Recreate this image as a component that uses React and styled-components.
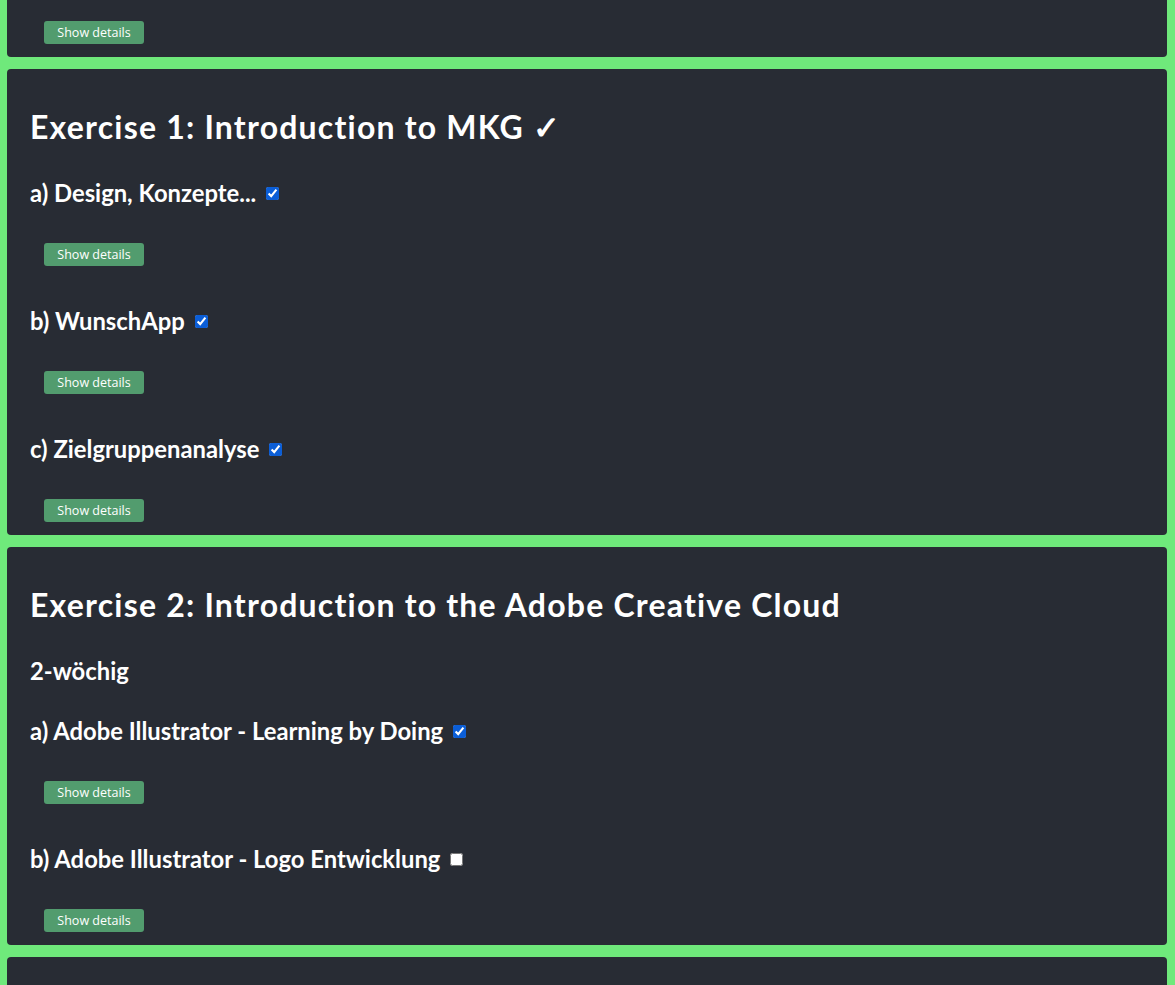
import React from "react";
import styled, { createGlobalStyle } from "styled-components";

const Global = createGlobalStyle`
  html, body { margin: 0; padding: 0; background: #6fe97b; }
  body { font-family: Lato, "Noto Sans", sans-serif; }
`;

const Page = styled.div`
  display: flex;
  flex-direction: column;
  gap: 12px;
  padding: 0 8px 0 7px;
  margin-top: -13px;
`;

const Card = styled.section`
  background: #282c34;
  border-radius: 4px;
  padding: 0 23px 13.5px;
  display: flex;
  flex-direction: column;
  color: #fff;
`;

const Title = styled.h1`
  margin: 39px 0 33.5px;
  font-size: 32px;
  line-height: 38px;
  font-weight: 700;
  letter-spacing: 1.2px;
  white-space: nowrap;
`;

const Sub = styled.h3`
  margin: 0;
  font-size: 23.8px;
  line-height: 26px;
  font-weight: 700;
  display: flex;
  align-items: center;
  white-space: nowrap;
`;

const Item = styled.div`
  display: flex;
  flex-direction: column;
  align-items: flex-start;
  gap: 37px;
  & + & { margin-top: 42px; }
`;

const Note = styled(Sub)`
  margin-bottom: 34px;
`;

const Check = styled.input`
  width: 13px;
  height: 13px;
  margin: 2px 0 0 10px;
  accent-color: #0b5ed7;
`;

const Button = styled.button`
  margin-left: 14px;
  background: #529c6e;
  color: #fff;
  border: none;
  border-radius: 3px;
  height: 23px;
  width: 100px;
  padding: 0;
  font-family: "Open Sans", "Noto Sans", sans-serif;
  font-size: 12.5px;
  cursor: pointer;
`;

const Spacer = styled.div`
  height: ${(p) => p.h}px;
`;

function Task({ label, done }) {
  return (
    <Item>
      <Sub>
        {label}
        <Check type="checkbox" checked={done} readOnly />
      </Sub>
      <Button>Show details</Button>
    </Item>
  );
}

export default function App() {
  return (
    <>
      <Global />
      <Page>
        <Card>
          <Spacer h={33.5} />
          <Button>Show details</Button>
        </Card>
        <Card>
          <Title>Exercise 1: Introduction to MKG ✓</Title>
          <Task label="a) Design, Konzepte..." done />
          <Task label="b) WunschApp" done />
          <Task label="c) Zielgruppenanalyse" done />
        </Card>
        <Card>
          <Title>Exercise 2: Introduction to the Adobe Creative Cloud</Title>
          <Note>2-wöchig</Note>
          <Task label="a) Adobe Illustrator - Learning by Doing" done />
          <Task label="b) Adobe Illustrator - Logo Entwicklung" done={false} />
        </Card>
        <Card>
          <Title>Exercise 3: Introduction to Figma</Title>
        </Card>
      </Page>
    </>
  );
}
